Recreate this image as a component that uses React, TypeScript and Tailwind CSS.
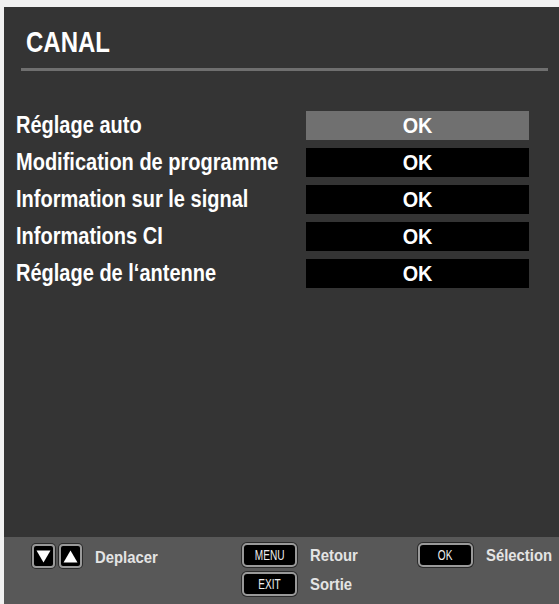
import React from "react";

const rows = [
  { label: "Réglage auto", active: true },
  { label: "Modification de programme", active: false },
  { label: "Information sur le signal", active: false },
  { label: "Informations CI", active: false },
  { label: "Réglage de l‘antenne", active: false },
];

const font = { fontFamily: '"Liberation Sans", Arial, sans-serif' };

// the OSD font is a condensed helvetica, so squeeze liberation sans a bit
function Key({ children }: { children: React.ReactNode }) {
  return (
    <div className="flex h-[24px] w-[55px] items-center justify-center rounded-[5px] border-2 border-[#9a9a9a] bg-black shadow-[0_0_0_1px_#2a2a2a]">
      <span className="inline-block scale-x-[0.72] text-[14px] leading-none font-normal text-[#eeeeee]">{children}</span>
    </div>
  );
}

function ArrowKey({ up }: { up?: boolean }) {
  return (
    <div className="flex h-[24px] w-[23px] items-center justify-center rounded-[4px] border-2 border-[#9a9a9a] bg-black shadow-[0_0_0_1px_#2a2a2a]">
      <svg width="15" height="13" viewBox="0 0 15 13">
        {up ? (
          <polygon points="7.5,0.5 14.5,12.5 0.5,12.5" fill="#ffffff" />
        ) : (
          <polygon points="0.5,0.5 14.5,0.5 7.5,12.5" fill="#ffffff" />
        )}
      </svg>
    </div>
  );
}

export default function App() {
  return (
    <div className="h-[604px] w-[559px] overflow-hidden bg-[#f1f1f1] pl-[4px] pt-[7px]">
      <div className="flex h-full flex-col bg-[#343434]" style={font}>
        {/* header */}
        <div className="pl-[22px] pt-[20px]">
          <h1 className="h-[30px] text-[30px] font-bold leading-[30px] text-white">
            <span className="inline-block origin-left scale-x-[0.8]">CANAL</span>
          </h1>
        </div>
        <div className="ml-[17px] mr-[11px] mt-[11px] h-[3px] bg-[#6f6f6f]" />

        {/* menu rows */}
        <div className="mt-[40px] flex flex-col gap-[8px] pl-[12px]">
          {rows.map((r) => (
            <div key={r.label} className="flex h-[29px] items-center">
              <div className="w-[290px] whitespace-nowrap text-[23px] font-bold leading-none text-white">
                <span className="inline-block origin-left scale-x-[0.87]">{r.label}</span>
              </div>
              <div
                className={
                  "flex h-[29px] w-[223px] items-center justify-center text-[22px] font-bold leading-none text-white " +
                  (r.active ? "bg-[#707070]" : "bg-black")
                }
              >
                <span className="inline-block scale-x-[0.9]">OK</span>
              </div>
            </div>
          ))}
        </div>

        {/* footer */}
        <div className="mt-auto flex h-[67px] bg-[#585858] pt-[6px] text-[16.5px] font-bold leading-none text-[#e4e4e4]">
          <div className="flex h-[26px] w-[239px] items-center pl-[28px]">
            <div className="flex gap-[4px]">
              <ArrowKey />
              <ArrowKey up />
            </div>
            <span className="ml-[13px] mt-[3px] inline-block origin-left scale-x-[0.9] whitespace-nowrap">Deplacer</span>
          </div>
          <div className="flex w-[177px] flex-col gap-[5px]">
            <div className="flex items-center">
              <Key>MENU</Key>
              <span className="ml-[13px] inline-block origin-left scale-x-[0.9]">Retour</span>
            </div>
            <div className="flex items-center">
              <Key>EXIT</Key>
              <span className="ml-[13px] inline-block origin-left scale-x-[0.9]">Sortie</span>
            </div>
          </div>
          <div className="flex items-start">
            <div className="flex items-center">
              <Key>OK</Key>
              <span className="ml-[13px] inline-block origin-left scale-x-[0.9] whitespace-nowrap">Sélection</span>
            </div>
          </div>
        </div>
      </div>
    </div>
  );
}
